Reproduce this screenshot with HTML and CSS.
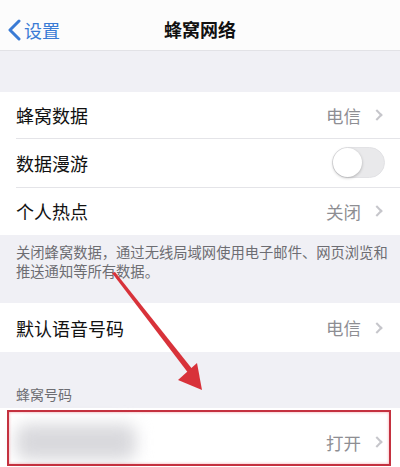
FILE: index.html
```html
<!DOCTYPE html>
<html lang="zh-CN">
<head>
    <meta charset="UTF-8">
    <meta name="viewport" content="width=device-width, initial-scale=1.0">
    <title>蜂窝网络</title>
    <link rel="stylesheet" href="styles.css">
</head>
<body>
    <div class="screen">
        <div class="navbar">
            <a class="back" href="#">
                <svg width="14" height="22" viewBox="0 0 14 22"><polyline points="12,2 3,11 12,20" fill="none" stroke="#3a7bd5" stroke-width="3" stroke-linecap="round" stroke-linejoin="round"/></svg>
                <span>设置</span>
            </a>
            <div class="title">蜂窝网络</div>
        </div>

        <div class="spacer"></div>

        <div class="group">
            <div class="row r1">
                <span class="label">蜂窝数据</span>
                <span class="value">电信<i class="chev"></i></span>
            </div>
            <div class="row r2">
                <span class="label">数据漫游</span>
                <span class="switch"><span class="knob"></span></span>
            </div>
            <div class="row r3">
                <span class="label">个人热点</span>
                <span class="value">关闭<i class="chev"></i></span>
            </div>
        </div>

        <div class="footnote">
            <div>关闭蜂窝数据，通过无线局域网使用电子邮件、网页浏览和</div>
            <div>推送通知等所有数据。</div>
        </div>

        <div class="group">
            <div class="row r4">
                <span class="label">默认语音号码</span>
                <span class="value">电信<i class="chev"></i></span>
            </div>
        </div>

        <div class="section-head">蜂窝号码</div>

        <div class="group">
            <div class="row r5">
                <span class="masked"></span>
                <span class="value">打开<i class="chev"></i></span>
                <div class="mark"></div>
            </div>
        </div>

        <!-- pointer arrow drawn over the list -->
        <svg class="arrow" width="400" height="467" viewBox="0 0 400 467">
            <polygon points="112,273 115,272 193,370 189,374" fill="#d8323a"/>
            <polygon points="202,390 178,380 197,363" fill="#d8323a"/>
        </svg>
    </div>
</body>
</html>
```

FILE: styles.css
```css
* {
    box-sizing: border-box;
}

body {
    margin: 0;
    padding: 0;
    background: #f0f0f5;
    font-family: 'Noto Sans CJK SC', 'Noto Sans', sans-serif;
    color: #111;
}

.screen {
    position: relative;
    width: 400px;
    height: 467px;
    overflow: hidden;
    background: #f0f0f5;
}

.navbar {
    position: relative;
    height: 51px;
    background: #fcfcfc;
    border-bottom: 1px solid #e2e2e6;
    display: flex;
    align-items: center;
    justify-content: center;
}

.back {
    position: absolute;
    left: 7px;
    top: 19px;
    display: flex;
    align-items: center;
    gap: 3px;
    color: #3a7bd5;
    text-decoration: none;
    font-size: 18px;
    line-height: 22px;
}

.title {
    font-size: 18px;
    font-weight: bold;
    padding-top: 8px;
}

.spacer {
    height: 41px;
}

.group {
    background: #fff;
}

.row {
    position: relative;
    display: flex;
    align-items: center;
    justify-content: space-between;
    padding: 0 16px;
    font-size: 18px;
}

.row + .row::before {
    content: '';
    position: absolute;
    top: 0;
    left: 16px;
    right: 0;
    border-top: 1px solid #e4e4e8;
}

.r1 { height: 46px; }
.r2 { height: 49px; }
.r3 { height: 48px; }
.r4 { height: 49px; }
.r5 { height: 62px; padding-top: 6px; }

.value {
    display: flex;
    align-items: center;
    color: #8e8e93;
    font-size: 17.5px;
}

.chev {
    width: 8px;
    height: 8px;
    margin-left: 12px;
    margin-right: 3px;
    border-top: 2px solid #c6c6cb;
    border-right: 2px solid #c6c6cb;
    transform: rotate(45deg);
}

.switch {
    position: relative;
    width: 53px;
    height: 31px;
    margin-right: -1px;
    border-radius: 16px;
    background: #e9e9eb;
    border: 1px solid #e2e2e5;
}

.knob {
    position: absolute;
    left: 0;
    top: 0;
    width: 29px;
    height: 29px;
    border-radius: 50%;
    background: #fff;
    box-shadow: 0 1px 3px rgba(0, 0, 0, 0.25);
}

.footnote {
    padding: 7px 0 23px 16px;
    font-size: 14.3px;
    line-height: 19px;
    color: #6d6d72;
    white-space: nowrap;
}

.section-head {
    padding: 33px 16px 5px;
    font-size: 14px;
    line-height: 18px;
    color: #6d6d72;
}

.masked {
    width: 120px;
    height: 36px;
    margin-left: 0;
    background: #d9d9dd;
    border-radius: 10px;
    filter: blur(8px);
}

.mark {
    position: absolute;
    left: 7px;
    right: 9px;
    top: 2px;
    bottom: 4px;
    border: 2.5px solid #c4313f;
    box-shadow: inset 0 0 3px rgba(240, 120, 130, 0.7);
}

.arrow {
    position: absolute;
    left: 0;
    top: 0;
}
```
